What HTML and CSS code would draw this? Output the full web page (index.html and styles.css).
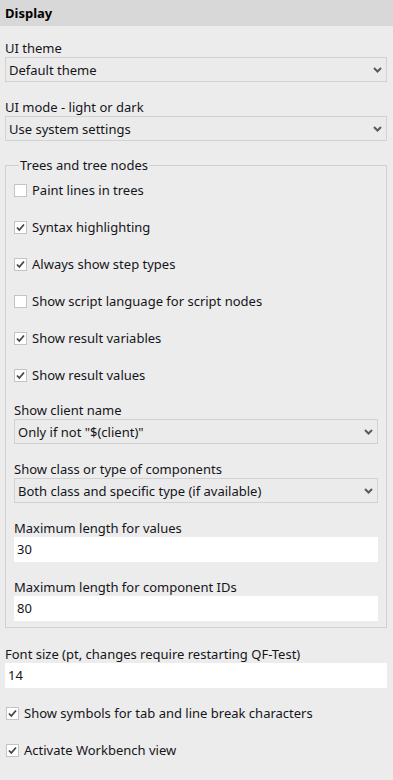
FILE: index.html
```html
<!DOCTYPE html>
<html>
<head>
<meta charset="utf-8">
<link rel="stylesheet" href="styles.css">
</head>
<body>
<div class="header">Display</div>
<div class="content">
  <div class="field">
    <div class="label">UI theme</div>
    <div class="select"><span>Default theme</span><svg class="chev" width="9" height="6" viewBox="0 0 9 6"><polyline points="1,1 4.5,4.5 8,1" fill="none" stroke="#5a5a5a" stroke-width="2"/></svg></div>
  </div>
  <div class="field">
    <div class="label">UI mode - light or dark</div>
    <div class="select"><span>Use system settings</span><svg class="chev" width="9" height="6" viewBox="0 0 9 6"><polyline points="1,1 4.5,4.5 8,1" fill="none" stroke="#5a5a5a" stroke-width="2"/></svg></div>
  </div>
  <fieldset class="group">
    <legend>Trees and tree nodes</legend>
    <div class="check"><span class="box"></span>Paint lines in trees</div>
    <div class="check"><span class="box"><svg width="11" height="11" viewBox="0 0 11 11"><polyline points="2,5.5 4.3,8 9,2.5" fill="none" stroke="#444" stroke-width="1.8"/></svg></span>Syntax highlighting</div>
    <div class="check"><span class="box"><svg width="11" height="11" viewBox="0 0 11 11"><polyline points="2,5.5 4.3,8 9,2.5" fill="none" stroke="#444" stroke-width="1.8"/></svg></span>Always show step types</div>
    <div class="check"><span class="box"></span>Show script language for script nodes</div>
    <div class="check"><span class="box"><svg width="11" height="11" viewBox="0 0 11 11"><polyline points="2,5.5 4.3,8 9,2.5" fill="none" stroke="#444" stroke-width="1.8"/></svg></span>Show result variables</div>
    <div class="check"><span class="box"><svg width="11" height="11" viewBox="0 0 11 11"><polyline points="2,5.5 4.3,8 9,2.5" fill="none" stroke="#444" stroke-width="1.8"/></svg></span>Show result values</div>
    <div class="field">
      <div class="label">Show client name</div>
      <div class="select"><span>Only if not "$(client)"</span><svg class="chev" width="9" height="6" viewBox="0 0 9 6"><polyline points="1,1 4.5,4.5 8,1" fill="none" stroke="#5a5a5a" stroke-width="2"/></svg></div>
    </div>
    <div class="field">
      <div class="label">Show class or type of components</div>
      <div class="select"><span>Both class and specific type (if available)</span><svg class="chev" width="9" height="6" viewBox="0 0 9 6"><polyline points="1,1 4.5,4.5 8,1" fill="none" stroke="#5a5a5a" stroke-width="2"/></svg></div>
    </div>
    <div class="field">
      <div class="label">Maximum length for values</div>
      <div class="input">30</div>
    </div>
    <div class="field">
      <div class="label">Maximum length for component IDs</div>
      <div class="input">80</div>
    </div>
  </fieldset>
  <div class="field after-group">
    <div class="label">Font size (pt, changes require restarting QF-Test)</div>
    <div class="input">14</div>
  </div>
  <div class="check outer first"><span class="box"><svg width="11" height="11" viewBox="0 0 11 11"><polyline points="2,5.5 4.3,8 9,2.5" fill="none" stroke="#444" stroke-width="1.8"/></svg></span>Show symbols for tab and line break characters</div>
  <div class="check outer"><span class="box"><svg width="11" height="11" viewBox="0 0 11 11"><polyline points="2,5.5 4.3,8 9,2.5" fill="none" stroke="#444" stroke-width="1.8"/></svg></span>Activate Workbench view</div>
</div>
</body>
</html>
```
FILE: styles.css
```css
* { box-sizing: border-box; }
html, body {
  margin: 0;
  padding: 0;
  background: #ececec;
}
body {
  font-family: "Noto Sans", "Open Sans", sans-serif;
  font-size: 13px;
  color: #151520;
  width: 393px;
  height: 780px;
  overflow: hidden;
}
.header {
  height: 26px;
  background: #d8d8d8;
  font-weight: bold;
  line-height: 26px;
  padding-left: 5px;
  color: #000;
}
.content {
  padding: 13px 6px 0 5px;
  display: flex;
  flex-direction: column;
}
.field {
  display: flex;
  flex-direction: column;
}
.field + .field { margin-top: 16px; }
.label {
  height: 18px;
  line-height: 18px;
  white-space: nowrap;
}
.select {
  height: 25px;
  border: 1px solid #d2d2d2;
  background: #ebebeb;
  display: flex;
  align-items: center;
  justify-content: space-between;
  padding: 0 4px 0 3px;
}
.select span { white-space: nowrap; }
.chev { flex: none; }
.input {
  height: 25px;
  background: #fff;
  line-height: 25px;
  padding-left: 3px;
}
.group {
  margin: 15px 0 0 0;
  padding: 6px 8px 6px 8px;
  border: 1px solid #d0d0d0;
  display: flex;
  flex-direction: column;
  min-width: 0;
}
.group legend {
  padding: 0 1px;
  margin-left: 5px;
  line-height: 18px;
}
.check {
  height: 20px;
  display: flex;
  align-items: center;
  white-space: nowrap;
}
.check + .check { margin-top: 17px; }
.check + .field { margin-top: 16px; }
.box {
  width: 13px;
  height: 13px;
  background: #fff;
  border: 1px solid #c4c4c4;
  margin-right: 5px;
  display: flex;
  align-items: center;
  justify-content: center;
  flex: none;
}
.box svg { display: block; }
.after-group { margin-top: 17px; }
.check.outer { margin-left: 1px; }
.check.first { margin-top: 15px; }
```
